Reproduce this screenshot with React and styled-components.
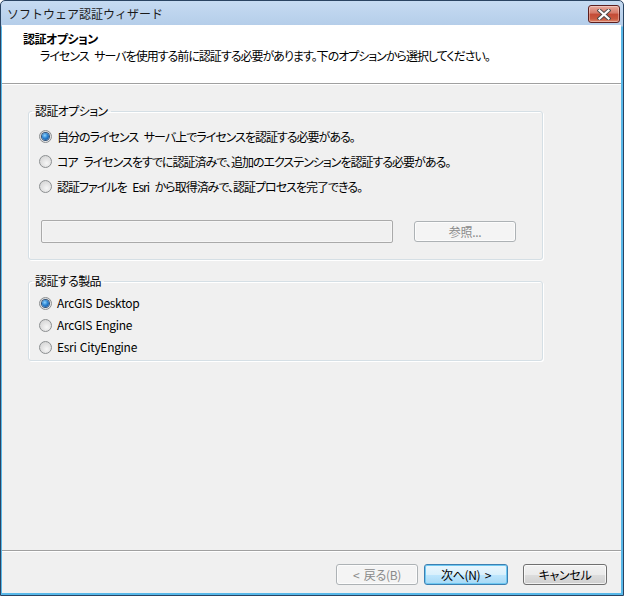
import React from 'react';
import styled, { createGlobalStyle } from 'styled-components';

const GlobalStyle = createGlobalStyle`
    * { box-sizing: border-box; }
    body {
        margin: 0;
        background: #ffffff;
        font-family: "Noto Sans CJK JP", "Noto Sans", sans-serif;
        font-size: 12px;
    }
`;

const Window = styled.div`
    width: 624px;
    height: 596px;
    display: flex;
    flex-direction: column;
    border: 1px solid #2a4462;
    border-radius: 5px 5px 0 0;
    background: linear-gradient(to bottom, #c6dbf2 0, #b4cde9 25px, #58b8e9 26px, #58b8e9 100%);
`;

const TitleBar = styled.div`
    height: 24px;
    flex: none;
    display: flex;
    align-items: center;
    justify-content: space-between;
    padding: 0 3px 0 6px;
`;

const Title = styled.span`
    font-size: 12px;
    line-height: 16px;
    color: #1a1a1a;
    margin-top: 1px;
`;

const CloseButton = styled.div`
    width: 32px;
    height: 18px;
    margin-top: 2px;
    display: flex;
    align-items: center;
    justify-content: center;
    border: 1px solid #5c1e1e;
    border-radius: 3px;
    background: linear-gradient(to bottom, #e9a99c 0%, #d47866 45%, #c44b36 50%, #c9593f 80%, #e08a6f 100%);
    box-shadow: inset 0 0 0 1px rgba(255, 255, 255, 0.35);
`;

const Content = styled.div`
    flex: 1;
    display: flex;
    flex-direction: column;
    margin: 0 2px 2px 1px;
    background: #f0f0f0;
`;

const Header = styled.div`
    height: 59px;
    flex: none;
    background: #ffffff;
    padding: 6px 0 0 21px;
    border-bottom: 1px solid #a0a0a0;
    box-shadow: 0 1px 0 #ffffff;
`;

const HeaderTitle = styled.div`
    font-weight: 700;
    line-height: 16px;
    letter-spacing: -0.5px;
    font-feature-settings: "palt";
`;

const HeaderText = styled.div`
    line-height: 16px;
    margin: 1px 0 0 17px;
    letter-spacing: -1px;
    word-spacing: 4px;
    font-feature-settings: "palt";
`;

const Body = styled.div`
    flex: 1;
    padding: 20px 0 0 26px;
`;

const Group = styled.fieldset`
    width: 515px;
    margin: ${({ $top }) => $top || 0}px 0 0 0;
    padding: ${({ $pad }) => $pad || '0'};
    border: 1px solid #d5dfe5;
    border-radius: 3px;
    box-shadow: 1px 1px 0 #ffffff, inset 1px 1px 0 #ffffff;
    min-inline-size: 0;
`;

const Legend = styled.legend`
    margin-left: 3px;
    padding: 0 3px;
    line-height: 14px;
    letter-spacing: -0.6px;
    font-feature-settings: "palt";
    color: #000;
`;

const RadioRow = styled.label`
    height: ${({ $h }) => $h || 25}px;
    display: flex;
    align-items: center;
    gap: 5px;
    padding-left: 10px;
    line-height: 14px;
    letter-spacing: ${({ $latin }) => ($latin ? '-0.3px' : '-1px')};
    word-spacing: ${({ $latin }) => ($latin ? '1px' : '4px')};
    font-feature-settings: "palt";
`;

const RadioCircle = styled.span`
    width: 13px;
    height: 13px;
    flex: none;
    border-radius: 50%;
    border: 1px solid #8c8f91;
    background: radial-gradient(circle at 60% 65%, #f6f6f6 0%, #e3e3e3 45%, #cfcfcf 100%);
    display: flex;
    align-items: center;
    justify-content: center;

    &::after {
        content: '';
        display: ${({ $checked }) => ($checked ? 'block' : 'none')};
        width: 7px;
        height: 7px;
        border-radius: 50%;
        background: radial-gradient(circle at 40% 35%, #8fd3ff 0%, #2a83d1 45%, #10438b 100%);
        box-shadow: 0 0 0 1px #31537a;
    }
`;

const FileRow = styled.div`
    display: flex;
    align-items: flex-start;
    margin: 21px 0 0 12px;
`;

const PathInput = styled.div`
    width: 352px;
    height: 23px;
    border: 1px solid #aaaaaa;
    border-radius: 2px;
    background: #f0f0f0;
    box-shadow: inset 0 0 0 1px #f6f6f6;
`;

const Button = styled.div`
    width: ${({ $w }) => $w || 84}px;
    height: ${({ $h }) => $h || 21}px;
    display: flex;
    align-items: center;
    justify-content: center;
    border-radius: 3px;
    font-size: 12px;
    line-height: 14px;
    letter-spacing: -0.3px;
    word-spacing: 2px;
    font-feature-settings: "palt";
    border: 1px solid ${({ $variant }) => ($variant === 'disabled' ? '#adb2b5' : $variant === 'default' ? '#3c7fb1' : '#707070')};
    color: ${({ $variant }) => ($variant === 'disabled' ? '#8a8a8a' : '#000')};
    background: ${({ $variant }) =>
        $variant === 'disabled'
            ? '#f4f4f4'
            : $variant === 'default'
                ? 'linear-gradient(to bottom, #eaf6fd 0%, #d9f0fc 50%, #bee6fd 51%, #a7d9f5 100%)'
                : 'linear-gradient(to bottom, #f2f2f2 0%, #ebebeb 50%, #dddddd 51%, #cfcfcf 100%)'};
    box-shadow: ${({ $variant }) => ($variant === 'default' ? 'inset 0 0 0 1px #6ec8f2' : 'inset 0 0 0 1px rgba(255,255,255,0.7)')};
`;

const BrowseButton = styled(Button)`
    margin: 1px 0 0 21px;
`;

const Footer = styled.div`
    height: 43px;
    flex: none;
    display: flex;
    justify-content: flex-end;
    align-items: flex-start;
    padding: 13px 14px 0 0;
    border-top: 1px solid #a0a0a0;
    box-shadow: inset 0 1px 0 #ffffff;
`;

const NextButton = styled(Button)`
    margin: 0 15px 0 6px;
`;

const Radio = ({ checked, children, h, latin }) => (
    <RadioRow $h={h} $latin={latin}>
        <RadioCircle $checked={checked} />
        <span>{children}</span>
    </RadioRow>
);

const CloseIcon = () => (
    <svg width="14" height="11" viewBox="0 0 14 11">
        <path d="M2.5 1.5 L11.5 9.5 M11.5 1.5 L2.5 9.5" stroke="#4a4a4a" strokeWidth="4" strokeLinecap="square" />
        <path d="M2.5 1.5 L11.5 9.5 M11.5 1.5 L2.5 9.5" stroke="#ffffff" strokeWidth="2.2" strokeLinecap="square" />
    </svg>
);

const App = () => (
    <>
        <GlobalStyle />
        <Window>
            <TitleBar>
                <Title>ソフトウェア認証ウィザード</Title>
                <CloseButton><CloseIcon /></CloseButton>
            </TitleBar>
            <Content>
                <Header>
                    <HeaderTitle>認証オプション</HeaderTitle>
                    <HeaderText>ライセンス サーバを使用する前に認証する必要があります。下のオプションから選択してください。</HeaderText>
                </Header>
                <Body>
                    <Group $pad="6px 0 16px 0">
                        <Legend>認証オプション</Legend>
                        <Radio checked>自分のライセンス サーバ上でライセンスを認証する必要がある。</Radio>
                        <Radio>コア ライセンスをすでに認証済みで、追加のエクステンションを認証する必要がある。</Radio>
                        <Radio>認証ファイルを Esri から取得済みで、認証プロセスを完了できる。</Radio>
                        <FileRow>
                            <PathInput />
                            <BrowseButton $variant="disabled" $w={102} $h={21}>参照...</BrowseButton>
                        </FileRow>
                    </Group>
                    <Group $top={14} $pad="4px 0 2px 0">
                        <Legend>認証する製品</Legend>
                        <Radio checked h={22} latin>ArcGIS Desktop</Radio>
                        <Radio h={22} latin>ArcGIS Engine</Radio>
                        <Radio h={22} latin>Esri CityEngine</Radio>
                    </Group>
                </Body>
                <Footer>
                    <Button $variant="disabled" $w={82}>&lt; 戻る(B)</Button>
                    <NextButton $variant="default">次へ(N) &gt;</NextButton>
                    <Button>キャンセル</Button>
                </Footer>
            </Content>
        </Window>
    </>
);

export default App;
